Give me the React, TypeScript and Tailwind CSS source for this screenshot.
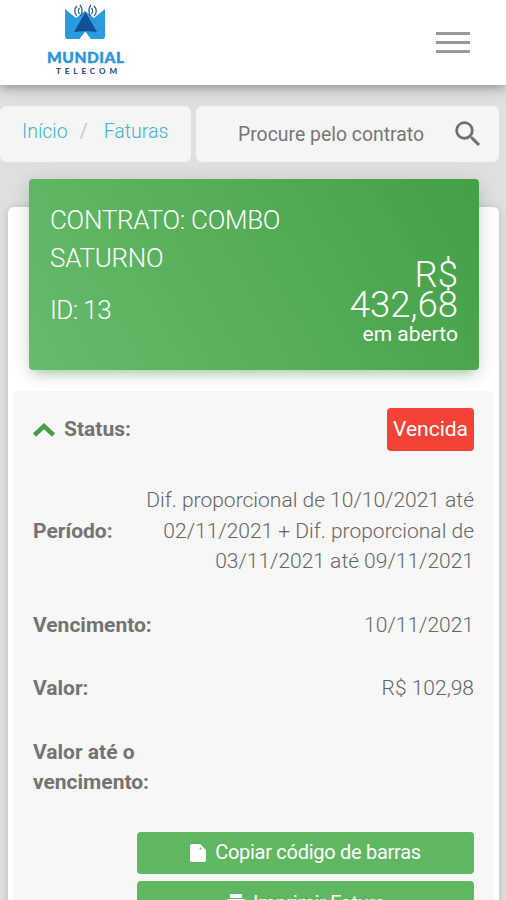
import type { ReactNode } from "react";

type RowProps = {
  label: string;
  children?: ReactNode;
  className?: string;
};

function Logo() {
  return (
    <svg width="80" height="75" viewBox="0 0 80 75" className="ml-[46px] mt-[1px]">
      <path d="M19 8 L30 17 L39 10 L48 17 L59 8 V35 Q59 38 56 38 H44.500 L39 31 L33.500 38 H22 Q19 38 19 35 Z" fill="#2a9be0" />
      <path d="M39.500 11 L51 31 L39.500 30 L28 31 Z" fill="#134f94" />
      <path d="M34 38 L39.500 31 L45 38 Z" fill="#fff" />
      <g fill="none" stroke="#2c5f93" strokeWidth="1.300">
        <path d="M31 5 A5 6 0 0 0 31 15 M33.500 7 A3 4 0 0 0 33.500 13 M34 4 Q38 9 34.500 15" />
        <path d="M48 5 A5 6 0 0 1 48 15 M45.500 7 A3 4 0 0 1 45.500 13 M45 4 Q41 9 44.500 15" />
      </g>
      <text x="1" y="61.500" textLength="77" fontFamily="Lato, sans-serif" fontWeight="900" fontSize="15.500" fill="#2796df" stroke="#2796df" strokeWidth="0.400">
        MUNDIAL
      </text>
      <text x="10" y="72.500" textLength="61" fontFamily="Lato, sans-serif" fontWeight="900" fontSize="8" fill="#2f4f82">
        TELECOM
      </text>
    </svg>
  );
}

function Row({ label, children, className = "" }: RowProps) {
  return (
    <div className={`flex items-center justify-between ${className}`}>
      <span className="w-[130px] font-bold text-[#737373]">{label}</span>
      <span className="shrink-0 text-right font-light text-[#666]">{children}</span>
    </div>
  );
}

export default function App() {
  return (
    <div className="h-[900px] w-[506px] overflow-hidden bg-[#dfdfdf] font-['Roboto',sans-serif] text-[#666]">
      {/* Header */}
      <header className="flex h-[85px] items-start justify-between bg-white shadow-[0_2px_12px_rgba(0,0,0,0.4)]">
        <Logo />
        <button aria-label="Menu" className="mr-9 mt-8 flex w-[34px] flex-col gap-1.5">
          <span className="h-[3px] bg-[#999]" />
          <span className="h-[3px] bg-[#999]" />
          <span className="h-[3px] bg-[#999]" />
        </button>
      </header>

      {/* Breadcrumb + search */}
      <div className="mt-[21px] flex h-14 gap-[5px] pr-[7px]">
        <nav className="flex w-[191px] items-center rounded-md bg-[#f5f5f5] pb-[4px] pl-[22px] text-[19.500px] text-[#3bb5cd]">
          <a className="font-light">Início</a>
          <span className="ml-3 text-[#c8c8c8]">/</span>
          <a className="ml-4 font-light">Faturas</a>
        </nav>
        <div className="flex flex-1 items-center justify-between rounded-md bg-[#f5f5f5] pl-[42px] pr-[14px] text-[19.400px]">
          <span className="whitespace-nowrap pt-0.5 text-[#777]">Procure pelo contrato</span>
          <svg width="34" height="34" viewBox="0 0 24 24" fill="#707070">
            <path d="M15.500 14h-.79l-.28-.27A6.471 6.471 0 0 0 16 9.500 6.500 6.500 0 1 0 9.500 16c1.610 0 3.090-.59 4.230-1.570l.27.28v.79l5 4.990L20.490 19l-4.990-5zm-6 0C7.010 14 5 11.990 5 9.500S7.010 5 9.500 5 14 7.010 14 9.500 11.990 14 9.500 14z" />
          </svg>
        </div>
      </div>

      {/* Invoice card */}
      <main className="ml-2 mt-[45px] flex h-[720px] w-[491px] flex-col rounded-md bg-white px-1.5 shadow-[0_1px_8px_rgba(0,0,0,0.16)]">
        <section className="z-10 -mt-7 ml-[15px] flex h-[191px] w-[450px] shrink-0 justify-between rounded bg-linear-60 from-[#66bb6a] to-[#43a047] px-[21px] text-white shadow-[0_4px_20px_0_rgba(0,0,0,0.14),0_7px_10px_-5px_rgba(76,175,80,0.4)]">
          <div className="pt-[22px] text-[26px] font-light leading-[38px] tracking-[-0.28px]">
            <p className="w-[250px]">CONTRATO: COMBO SATURNO</p>
            <p className="mt-[14px] tracking-[-0.6px]">ID: 13</p>
          </div>
          <div className="shrink-0 pt-[81px] text-right">
            <p className="text-[36.500px] font-light leading-[30px]">
              R$
              <br />
              432,68
            </p>
            <p className="text-[21px] leading-[29px]">em aberto</p>
          </div>
        </section>

        <section className="mt-[21px] h-[540px] shrink-0 rounded-t bg-[#f7f7f7] pl-[19px] pr-[19px] pt-[17px] text-[21px] leading-[30.500px]">
          <div className="flex h-[43px] items-center justify-between">
            <div className="flex items-center">
              <svg width="22" height="16" viewBox="0 0 22 16" fill="none" stroke="#43a047" strokeWidth="4.500">
                <path d="M1.500 13 L11 4 L20.500 13" />
              </svg>
              <span className="ml-[9px] font-bold text-[#737373]">Status:</span>
            </div>
            <span className="flex h-[43px] w-[87px] items-center justify-center rounded bg-[#f44336] text-white">
              Vencida
            </span>
          </div>
          <Row label="Período:" className="mt-[34px]">
            <span className="block w-[335px]">
              Dif. proporcional de 10/10/2021 até 02/11/2021 + Dif. proporcional de 03/11/2021 até 09/11/2021
            </span>
          </Row>
          <Row label="Vencimento:" className="mt-[33px]">10/11/2021</Row>
          <Row label="Valor:" className="mt-[33px]">R$ 102,98</Row>
          <Row label="Valor até o vencimento:" className="mt-[33px]" />
          <div className="mt-[34px] flex">
            <span className="w-[104px] pt-[57px] font-bold text-[#737373]">:</span>
            <div className="flex flex-1 flex-col gap-[7px] text-[20px] tracking-[-0.28px] text-white">
              <button className="flex h-[42px] items-center justify-center gap-[9px] rounded bg-[#5fb762]">
                <svg width="16" height="18" viewBox="0 0 16 18">
                  <path d="M2 0 H10 L16 6 V16 Q16 18 14 18 H2 Q0 18 0 16 V2 Q0 0 2 0 Z" fill="#fff" />
                  <circle cx="10.500" cy="4.500" r="1" fill="#5fb762" />
                </svg>
                Copiar código de barras
              </button>
              <button className="flex h-[42px] items-center justify-center gap-[7px] rounded bg-[#5fb762] pt-[3px]">
                <svg width="20" height="18" viewBox="0 0 20 18" fill="#fff">
                  <path d="M4 0 H16 V4 H4 Z M3 5 H17 Q20 5 20 8 V14 H16 V18 H4 V14 H0 V8 Q0 5 3 5 Z" />
                </svg>
                Imprimir Fatura
              </button>
            </div>
          </div>
        </section>
      </main>
    </div>
  );
}
